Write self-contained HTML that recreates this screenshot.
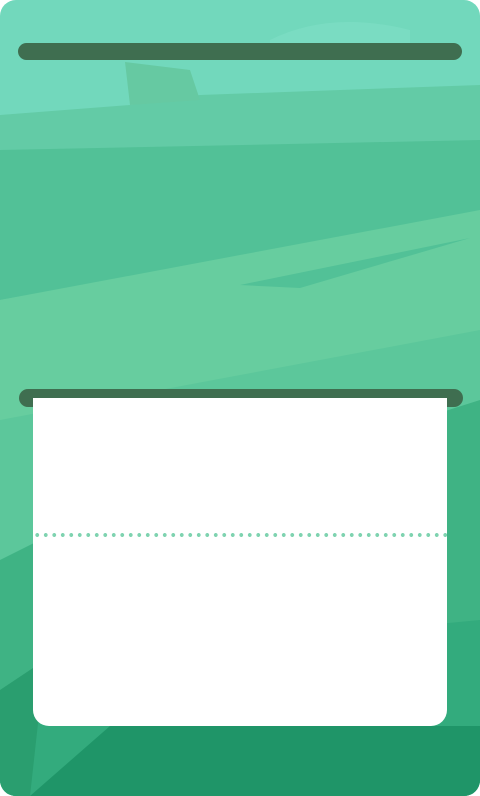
<!DOCTYPE html>
<html><head><style>
html,body{margin:0;padding:0;background:#fff;}
.wrap{position:relative;width:480px;height:796px;border-radius:16px;overflow:hidden;}
svg.bg{position:absolute;left:0;top:0;}
.bar{position:absolute;background:#3f6e50;border-radius:9px;}
.card{position:absolute;left:33px;top:398px;width:414px;height:328px;background:#fff;border-radius:0 0 16px 16px;}
.dots{position:absolute;left:0;right:0;top:135px;height:4px;background-image:radial-gradient(circle,#7fd3b0 1.8px,transparent 2.1px);background-size:8.5px 4px;background-repeat:repeat-x;}
</style></head><body>
<div class="wrap">
<svg class="bg" width="480" height="796" viewBox="0 0 480 796">
<rect width="480" height="796" fill="#72d8bc"/>
<polygon points="0,115 130,105 200,95 480,85 480,300 0,300" fill="#63cba6"/>
<polygon points="125,62 190,70 200,100 130,105" fill="#66c9a2"/>
<polygon points="0,150 480,140 480,215 0,300" fill="#52c197"/>
<polygon points="0,300 480,210 480,400 0,420" fill="#67cd9f"/>
<polygon points="240,285 470,238 300,288" fill="#52c197"/>
<polygon points="0,420 480,330 480,796 0,796" fill="#5cc79b"/>
<polygon points="0,560 40,540 480,400 480,796 0,796" fill="#3fb384"/>
<polygon points="0,700 60,660 480,620 480,796 0,796" fill="#33ab7d"/>
<polygon points="30,796 110,726 480,726 480,796" fill="#1f9568"/>
<polygon points="0,690 45,660 30,796 0,796" fill="#2a9e6f"/>
<path d="M270 40 Q330 10 410 30 L410 60 L270 60Z" fill="#7adcc2"/>
</svg>
<div class="bar" style="left:18px;top:43px;width:444px;height:17px"></div>
<div class="bar" style="left:19px;top:389px;width:444px;height:18px"></div>
<div class="card"><div class="dots"></div></div>
</div>
</body></html>
